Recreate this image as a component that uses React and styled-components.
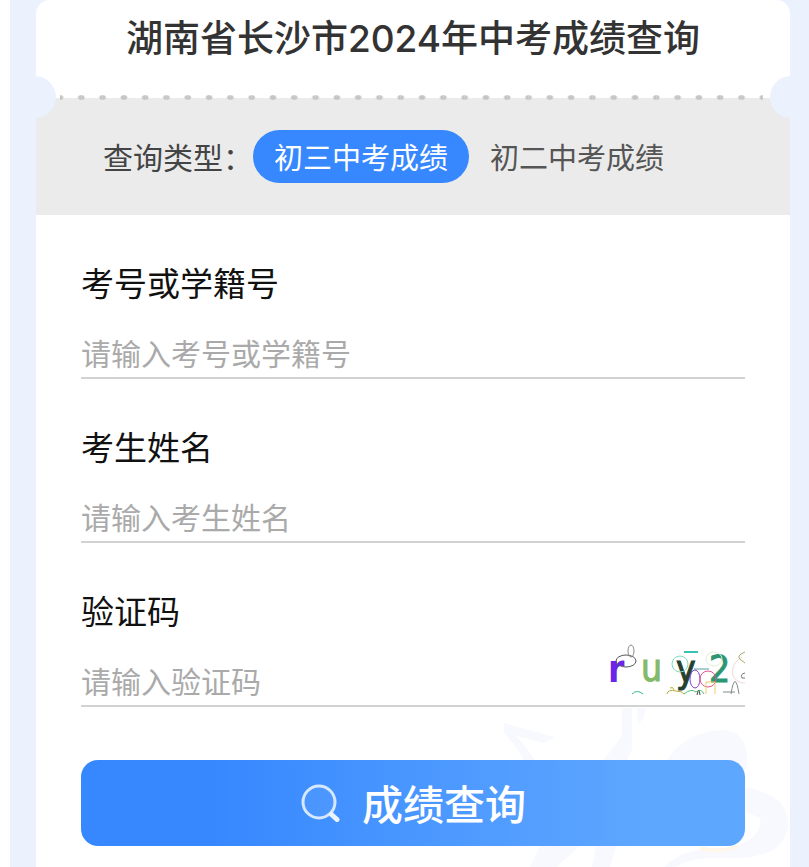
import { useState } from "react";
import styled, { createGlobalStyle } from "styled-components";

const GlobalStyle = createGlobalStyle`
  * {
    box-sizing: border-box;
  }
  body {
    margin: 0;
    background: white;
  }
  body, button, input {
    font-family: "Noto Sans CJK SC", "Noto Sans", sans-serif;
  }
`;

//Page
const Page = styled.div`
  min-height: 100vh;
  padding-left: 10px;
  display: flex;
`;
const Backdrop = styled.div`
  flex: 1;
  min-width: 0;
  display: flex;
  padding: 0 19px 0 26px;
  background: #ebf2fe;
`;
const Ticket = styled.main`
  position: relative;
  flex: 1;
  min-width: 0;
  display: flex;
  flex-direction: column;
  overflow: hidden;
  border-radius: 14px 14px 0 0;
  background: white;
`;

//Header
const Header = styled.header`
  position: relative;
  padding: 11px 24px 31px;
`;
const Title = styled.h1`
  margin: 0;
  font-family: Inter, "Noto Sans CJK SC", sans-serif;
  font-size: 37px;
  font-weight: 500;
  line-height: 56px;
  text-align: center;
  color: #333333;
`;
const Notch = styled.span`
  position: absolute;
  z-index: 1;
  bottom: -20px;
  ${(props) => props.$side}: -22px;
  width: 42px;
  height: 42px;
  border-radius: 50%;
  background: #ebf2fe;
`;
const Perforation = styled.span`
  position: absolute;
  z-index: 1;
  bottom: -2px;
  left: 24px;
  right: 27px;
  height: 5px;
  background-image: radial-gradient(
      ellipse 4px 3px at 0 50%,
      #c4c4c4 60%,
      transparent
    ),
    radial-gradient(ellipse 4px 3px at 100% 50%, #c4c4c4 60%, transparent);
  background-size: 21px 5px;
  background-repeat: round no-repeat;
`;

//Query type
const TypeBar = styled.div`
  display: flex;
  flex-wrap: wrap;
  align-items: center;
  padding: 32px 24px 32px 67px;
  background: #ebebeb;
`;
const TypeLabel = styled.span`
  font-size: 30px;
  line-height: 53px;
  color: #444444;
`;
const TypeButton = styled.button`
  height: 53px;
  padding: 0 21px;
  border: none;
  border-radius: 27px;
  font-size: 29px;
  line-height: 53px;
  cursor: pointer;
  color: ${(props) => (props.$active ? "white" : "#555555")};
  background: ${(props) => (props.$active ? "#3788ff" : "transparent")};
`;

//Form
const Form = styled.form`
  position: relative;
  flex: 1;
  display: flex;
  flex-direction: column;
  gap: 47px;
  padding: 47px 45px 21px;
`;
const Field = styled.div`
  display: flex;
  flex-direction: column;
  gap: 30px;
`;
const FieldLabel = styled.label`
  font-size: 33px;
  line-height: 40px;
  color: #111111;
`;
const InputRow = styled.div`
  display: flex;
  border-bottom: 2px solid #d2d2d2;
`;
const Input = styled.input`
  flex: 1;
  min-width: 0;
  height: 45px;
  padding: 0 0 5px;
  border: none;
  outline: none;
  font-size: 30px;
  color: #333333;
  background: transparent;
  &::placeholder {
    color: #aaaaaa;
    opacity: 1;
  }
`;
const CaptchaImage = styled.svg`
  flex: none;
  width: 136px;
  height: 50px;
  margin: -15px 0 10px;
  overflow: visible;
`;
const SubmitButton = styled.button`
  display: flex;
  justify-content: center;
  align-items: center;
  gap: 22px;
  height: 86px;
  margin-top: 6px;
  padding: 0 0 2px;
  border: none;
  border-radius: 17px;
  font-size: 41px;
  font-weight: 500;
  cursor: pointer;
  color: white;
  background: linear-gradient(90deg, #3788ff 20%, #5ea7ff 85%);
`;
const Watermark = styled.svg`
  position: absolute;
  right: 0;
  bottom: 0;
  width: 310px;
  height: 177px;
`;

const SearchIcon = () => (
  <svg width="40" height="40" viewBox="0 0 40 40" fill="none" aria-hidden="true">
    <circle cx="19" cy="20" r="16.5" fill="white" fillOpacity="0.06" />
    <circle cx="19" cy="20" r="16" stroke="#d5e8ff" strokeWidth="3" />
    <path d="M31.5 32.5L37 37.5" stroke="#eaf3ff" strokeWidth="5" strokeLinecap="round" />
  </svg>
);

const Captcha = () => (
  <CaptchaImage viewBox="0 0 136 50" fill="none" role="img" aria-label="ruy2">
    <g fontFamily="'DejaVu Sans Condensed', 'DejaVu Sans', sans-serif" fontSize="37">
      <text x="-1" y="37" fontWeight="700" fill="#6a25e8">r</text>
      <text x="32" y="36" fill="#83b968" stroke="#83b968">u</text>
      <text x="67" y="37" fill="#26402f" stroke="#26402f">y</text>
      <text x="100" y="37" fill="#2c9673" stroke="#2c9673">2</text>
    </g>
    <ellipse cx="17" cy="16" rx="10" ry="6" stroke="#55555c" />
    <ellipse cx="22" cy="6" rx="3" ry="6" stroke="#8a8a8a" />
    <path d="M23 49Q28 44 34 49" stroke="#39b98e" />
    <ellipse cx="71" cy="19" rx="8" ry="8" stroke="#7edcc0" />
    <path d="M75 7H89" stroke="#35c3b4" strokeWidth="2" />
    <path d="M85 24H100" stroke="#579a9d" />
    <ellipse cx="86" cy="34" rx="5" ry="9" stroke="#8b3fc4" />
    <ellipse cx="99" cy="34" rx="8" ry="8" stroke="#e05590" />
    <ellipse cx="105" cy="14" rx="8" ry="7" stroke="#dff0dc" />
    <path d="M58 49Q59 44 67 46Q73 46 75 49M61 43Q64 41 65 45" stroke="#b7ad39" />
    <path d="M75 49Q82 43 87 47Q92 43 95 49" stroke="#4bbd79" />
    <path d="M88 50Q90 41 91 50" stroke="#444444" />
    <path d="M97 49V37H106V49" stroke="#ead06a" />
    <path d="M114 47H126M122 49Q126 24 130 49" stroke="#808b8b" />
    <path d="M133 12Q121 19 124 31Q128 38 136 38" stroke="#efd9d6" />
    <path d="M136 7Q126 11 132 15L136 18" stroke="#a6ad65" />
    <path d="M136 28Q131 29 133 33H136" stroke="#777777" />
  </CaptchaImage>
);

const fields = [
  { id: "examNo", label: "考号或学籍号", placeholder: "请输入考号或学籍号" },
  { id: "name", label: "考生姓名", placeholder: "请输入考生姓名" },
  { id: "code", label: "验证码", placeholder: "请输入验证码", captcha: true },
];
const types = ["初三中考成绩", "初二中考成绩"];

export default function App() {
  const [type, setType] = useState(types[0]);

  return (
    <Page>
      <GlobalStyle />
      <Backdrop>
        <Ticket>
          <Header>
            <Title>湖南省长沙市2024年中考成绩查询</Title>
            <Notch $side="left" />
            <Perforation />
            <Notch $side="right" />
          </Header>
          <TypeBar role="group" aria-labelledby="type-label">
            <TypeLabel id="type-label">查询类型：</TypeLabel>
            {types.map((item) => (
              <TypeButton
                key={item}
                type="button"
                $active={item === type}
                aria-pressed={item === type}
                onClick={() => setType(item)}
              >
                {item}
              </TypeButton>
            ))}
          </TypeBar>
          <Watermark viewBox="0 0 310 177" aria-hidden="true">
            <g fill="#f7f9fe">
              <path d="M24 33Q48 40 75 47L64 53Q45 48 36 46Q52 62 60 80H48Q38 55 24 44Z" />
              <path d="M142 18H152V60L136 90H108Q132 60 142 45Z" />
              <path d="M157 18H166Q164 30 158 34Z" />
              <path d="M184 75Q204 40 246 40Q272 46 266 80H184Z" />
              <path d="M266 97Q310 106 308 136Q304 168 254 168Q210 166 196 177H184Q205 156 250 158Q284 148 280 128L266 122Z" />
              <path d="M60 156H100L76 177H50ZM116 156H136L130 177H112Z" />
            </g>
            <path d="M220 158Q240 164 258 156" stroke="#fff6ec" strokeWidth="4" fill="none" />
          </Watermark>
          <Form onSubmit={(e) => e.preventDefault()}>
            {fields.map((field) => (
              <Field key={field.id}>
                <FieldLabel htmlFor={field.id}>{field.label}</FieldLabel>
                <InputRow>
                  <Input id={field.id} placeholder={field.placeholder} autoComplete="off" />
                  {field.captcha && <Captcha />}
                </InputRow>
              </Field>
            ))}
            <SubmitButton type="submit">
              <SearchIcon />
              成绩查询
            </SubmitButton>
          </Form>
        </Ticket>
      </Backdrop>
    </Page>
  );
}
